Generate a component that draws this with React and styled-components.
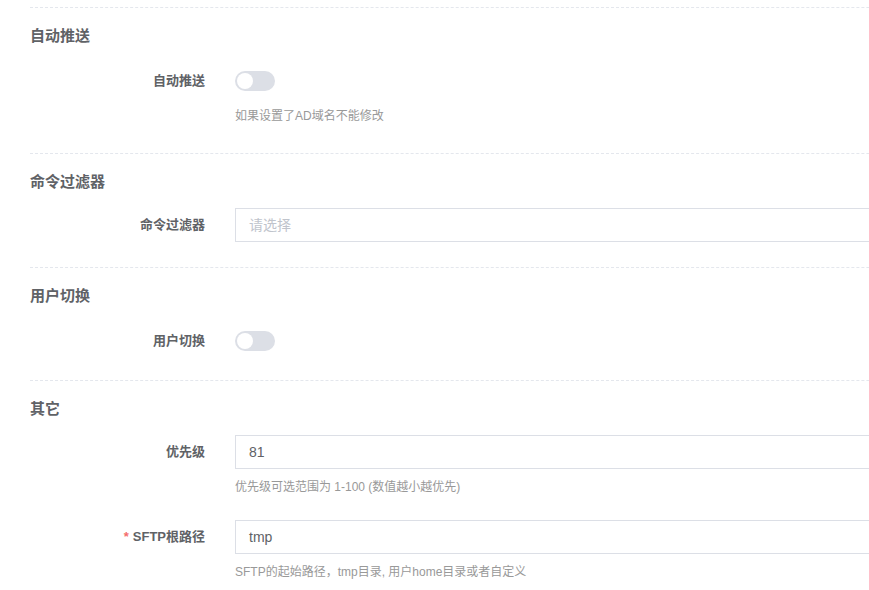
import styled, { createGlobalStyle } from 'styled-components'

const GlobalStyle = createGlobalStyle`
    html, body {
        margin: 0;
        padding: 0;
        background: #fff;
        overflow: hidden;
    }
    body {
        font-family: "Liberation Sans", "Noto Sans CJK SC", sans-serif;
        color: #606266;
    }
`

const Page = styled.div`
    width: 1200px;
    padding: 7px 0 0 30px;
`
const Section = styled.section`
    border-top: 1px dashed #e4e7ed;
    padding-top: 18px;
    padding-bottom: ${props => props.bottom || '22px'};
`
const SectionTitle = styled.h3`
    margin: 0 0 ${props => props.gap || '18px'};
    font-size: 15px;
    font-weight: bold;
    line-height: 20px;
    color: #606266;
`
const FormItem = styled.div`
    display: flex;
    align-items: flex-start;
    margin-bottom: ${props => props.mb || '0'};
`
const Label = styled.label`
    width: 175px;
    flex-shrink: 0;
    padding-right: 30px;
    text-align: right;
    font-size: 13px;
    font-weight: bold;
    line-height: 34px;
    color: #606266;
`
const Required = styled.span`
    color: #f56c6c;
    margin-right: 4px;
`
const Control = styled.div`
    flex: 1;
    display: flex;
    flex-direction: column;
`
const SwitchRow = styled.div`
    height: 34px;
    display: flex;
    align-items: center;
`
const Switch = styled.span`
    position: relative;
    width: 40px;
    height: 20px;
    border-radius: 10px;
    background: #dcdfe6;
    display: inline-block;

    &::after {
        content: '';
        position: absolute;
        top: 2px;
        left: 2px;
        width: 16px;
        height: 16px;
        border-radius: 50%;
        background: #fff;
    }
`
const Input = styled.div`
    box-sizing: border-box;
    height: 34px;
    border: 1px solid #dcdfe6;
    padding: 0 13px;
    font-size: 14px;
    line-height: 32px;
    color: ${props => props.placeholder ? '#c0c4cc' : '#606266'};
`
const Help = styled.div`
    font-size: 12px;
    line-height: 18px;
    margin-top: 9px;
    color: #999;
`

export default function App(){
    return(
        <Page>
            <GlobalStyle/>
            <Section bottom="28px">
                <SectionTitle>自动推送</SectionTitle>
                <FormItem>
                    <Label>自动推送</Label>
                    <Control>
                        <SwitchRow><Switch/></SwitchRow>
                        <Help>如果设置了AD域名不能修改</Help>
                    </Control>
                </FormItem>
            </Section>
            <Section bottom="25px">
                <SectionTitle gap="16px">命令过滤器</SectionTitle>
                <FormItem>
                    <Label>命令过滤器</Label>
                    <Control>
                        <Input placeholder="1">请选择</Input>
                    </Control>
                </FormItem>
            </Section>
            <Section bottom="22px">
                <SectionTitle>用户切换</SectionTitle>
                <FormItem>
                    <Label>用户切换</Label>
                    <Control>
                        <SwitchRow><Switch/></SwitchRow>
                    </Control>
                </FormItem>
            </Section>
            <Section>
                <SectionTitle gap="16px">其它</SectionTitle>
                <FormItem mb="24px">
                    <Label>优先级</Label>
                    <Control>
                        <Input>81</Input>
                        <Help>优先级可选范围为 1-100 (数值越小越优先)</Help>
                    </Control>
                </FormItem>
                <FormItem>
                    <Label><Required>*</Required>SFTP根路径</Label>
                    <Control>
                        <Input>tmp</Input>
                        <Help>SFTP的起始路径，tmp目录, 用户home目录或者自定义</Help>
                    </Control>
                </FormItem>
            </Section>
        </Page>
    )
}
